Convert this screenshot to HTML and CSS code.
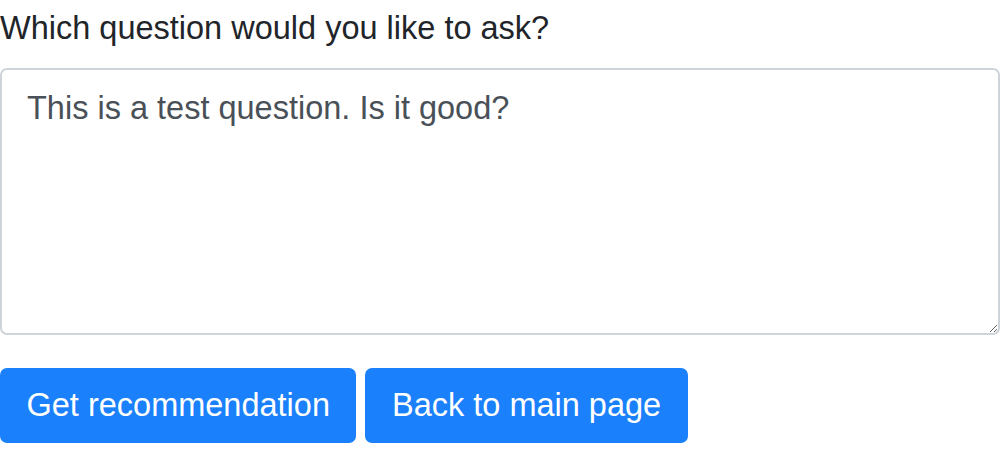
FILE: index.html
```html
<!DOCTYPE html>
<html>
<head>
<meta charset="utf-8">
<link rel="stylesheet" href="styles.css">
</head>
<body>
<form class="form">
  <label class="label" for="q">Which question would you like to ask?</label>
  <textarea id="q" class="input">This is a test question. Is it good?</textarea>
  <div class="actions">
    <button type="button" class="btn">Get recommendation</button>
    <button type="button" class="btn">Back to main page</button>
  </div>
</form>
</body>
</html>
```

FILE: styles.css
```css
html, body {
  margin: 0;
  padding: 0;
  background: #fff;
}
.form {
  display: flex;
  flex-direction: column;
  font-family: "Liberation Sans", Arial, sans-serif;
}
.label {
  font-size: 32.5px;
  line-height: 56px;
  color: #212529;
  margin-top: 0;
  margin-bottom: 12px;
  height: 56px;
}
.input {
  box-sizing: border-box;
  width: 1000px;
  height: 267px;
  margin: 0;
  border: 2px solid #ced4da;
  border-radius: 7px;
  padding: 14px 25px;
  font-family: "Liberation Sans", Arial, sans-serif;
  font-size: 32.5px;
  line-height: 48px;
  color: #495057;
  resize: vertical;
}
.actions {
  display: flex;
  gap: 9px;
  margin-top: 33px;
}
.btn {
  box-sizing: border-box;
  height: 75px;
  padding: 0 26.5px;
  border: none;
  border-radius: 7px;
  background: #1a80fb;
  color: #fff;
  font-family: "Liberation Sans", Arial, sans-serif;
  font-size: 32.5px;
}
```
